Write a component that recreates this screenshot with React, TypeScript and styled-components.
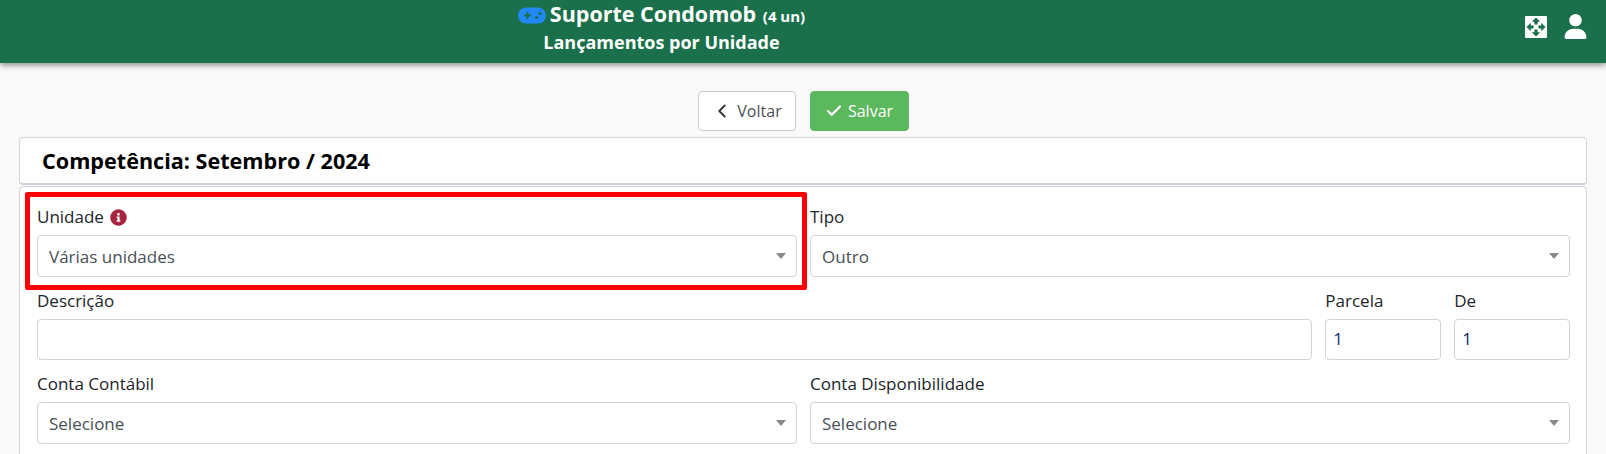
import React from "react";
import styled, { createGlobalStyle } from "styled-components";
import { FaInfoCircle } from "react-icons/fa";
import { FaUser } from "react-icons/fa6";
import { ChevronLeft, Check } from "lucide-react";

const Global = createGlobalStyle`
  html, body { margin: 0; padding: 0; background: #f9f9f9; }
  body { font-family: "Open Sans", "Noto Sans", sans-serif; font-size: 17px; color: #212529; overflow: hidden; }
  * { box-sizing: border-box; }
`;

const Page = styled.div`
  position: relative;
  width: 1606px;
  height: 454px;
  overflow: hidden;
`;

const Header = styled.header`
  height: 63px;
  background: #19704a;
  box-shadow: 0 2px 6px rgba(0, 0, 0, 0.45);
  display: flex;
  justify-content: space-between;
  color: #fff;
`;

const HeaderCenter = styled.div`
  margin-left: 497px;
  width: 329px;
  display: flex;
  flex-direction: column;
  align-items: center;
  font-weight: 700;
`;

const TitleLine = styled.div`
  display: flex;
  align-items: center;
  gap: 4px;
  font-size: 21.5px;
  line-height: 30px;
  height: 30px;
`;

const Small = styled.small`
  font-size: 15px;
  margin-left: 1px;
`;

const Subtitle = styled.div`
  font-size: 18px;
  line-height: 24px;
  margin-top: 0;
`;

const HeaderIcons = styled.div`
  display: flex;
  align-items: flex-start;
  gap: 16px;
  padding: 14px 18px 0 0;
`;

const ExpandSvg = styled.svg`
  margin-top: 2px;
`;

const Toolbar = styled.div`
  display: flex;
  justify-content: center;
  gap: 14px;
  padding: 28px 0 6px;
`;

const Btn = styled.button<{ $green?: boolean }>`
  height: 40px;
  width: ${(p) => (p.$green ? "99px" : "98px")};
  display: flex;
  align-items: center;
  justify-content: center;
  gap: ${(p) => (p.$green ? "5px" : "4px")};
  border-radius: 4px;
  border: 1px solid ${(p) => (p.$green ? "#5cb85c" : "#ccc")};
  background: ${(p) => (p.$green ? "#5cb85c" : "#fff")};
  color: ${(p) => (p.$green ? "#fff" : "#495057")};
  font-family: inherit;
  font-size: 16px;
`;

const Main = styled.main`
  margin: 0 19px;
`;

const TitleCard = styled.section`
  height: 48px;
  background: #fff;
  border: 1px solid #ced4da;
  border-bottom-width: 2px;
  border-radius: 4px;
  padding-left: 22px;
  font-size: 21.6px;
  font-weight: 700;
  color: #000;
  line-height: 46px;
`;

const FormCard = styled.section`
  margin-top: 1px;
  height: 300px;
  background: #fff;
  border: 1px solid #ced4da;
  border-radius: 4px;
  padding: 17px 16px 0 17px;
  display: grid;
  grid-template-columns: repeat(12, 1fr);
  column-gap: 13px;
  grid-auto-rows: 83.5px;
  align-content: start;
`;

const Field = styled.div<{ $span: number }>`
  grid-column: span ${(p) => p.$span};
  display: flex;
  flex-direction: column;
`;

const Label = styled.label`
  display: flex;
  align-items: center;
  gap: 6px;
  height: 31px;
  padding-bottom: 5px;
  font-size: 17px;
  line-height: 24px;
`;

const Control = styled.div<{ $input?: boolean }>`
  height: 41.5px;
  background: #fff;
  border: 1px solid #ced4da;
  border-radius: 4px;
  display: flex;
  align-items: center;
  justify-content: space-between;
  padding: ${(p) => (p.$input ? "0 7px 2px" : "1px 10px 0 11px")};
  font-size: 17px;
  color: #495057;
`;

const InputValue = styled.span`
  color: #14295f;
`;

const Caret = styled.span`
  width: 0;
  height: 0;
  border-left: 5px solid transparent;
  border-right: 5px solid transparent;
  border-top: 6px solid #888;
`;

const Highlight = styled.div`
  position: absolute;
  left: 25px;
  top: 192px;
  width: 782px;
  height: 98px;
  border: 5px solid #ff0000;
  border-radius: 2px;
  pointer-events: none;
`;

const Gamepad = () => (
  <svg width="28" height="17" viewBox="0 0 28 17" aria-hidden="true">
    <rect x="0" y="0.5" width="28" height="16" rx="8" fill="#2288f6" />
    <path d="M6 7.5h2.5v-2.5h2v2.5H13v2h-2.5V12h-2V9.5H6z" fill="#19704a" />
    <circle cx="18.5" cy="10.5" r="1.6" fill="#19704a" />
    <circle cx="22" cy="6.5" r="1.6" fill="#19704a" />
  </svg>
);

const arrow = "M11 1.5L15.2 5.8H12.6V8.6H9.4V5.8H6.8z";

const ExpandIcon = () => (
  <ExpandSvg width="22" height="22" viewBox="0 0 22 22" aria-hidden="true">
    <rect width="22" height="22" rx="1" fill="#fff" />
    <g fill="#19704a">
      <path d={arrow} />
      <path d={arrow} transform="rotate(90 11 11)" />
      <path d={arrow} transform="rotate(180 11 11)" />
      <path d={arrow} transform="rotate(270 11 11)" />
    </g>
  </ExpandSvg>
);

const SelectField = ({ span, label, value, extra }: { span: number; label: string; value: string; extra?: React.ReactNode }) => (
  <Field $span={span}>
    <Label>{label}{extra}</Label>
    <Control>
      <span>{value}</span>
      <Caret />
    </Control>
  </Field>
);

const InputField = ({ span, label, value }: { span: number; label: string; value?: string }) => (
  <Field $span={span}>
    <Label>{label}</Label>
    <Control $input>
      <InputValue>{value}</InputValue>
    </Control>
  </Field>
);

export default function App() {
  return (
    <Page>
      <Global />
      <Header>
        <HeaderCenter>
          <TitleLine>
            <Gamepad />
            <span>Suporte Condomob <Small>(4 un)</Small></span>
          </TitleLine>
          <Subtitle>Lançamentos por Unidade</Subtitle>
        </HeaderCenter>
        <HeaderIcons>
          <ExpandIcon />
          <FaUser size={25} color="#fff" />
        </HeaderIcons>
      </Header>
      <Toolbar>
        <Btn>
          <ChevronLeft size={22} color="#333" />
          Voltar
        </Btn>
        <Btn $green>
          <Check size={18} strokeWidth={3} color="#fff" />
          Salvar
        </Btn>
      </Toolbar>
      <Main>
        <TitleCard>Competência: Setembro / 2024</TitleCard>
        <FormCard>
          <SelectField span={6} label="Unidade" value="Várias unidades" extra={<FaInfoCircle size={17} color="#a6243f" />} />
          <SelectField span={6} label="Tipo" value="Outro" />
          <InputField span={10} label="Descrição" />
          <InputField span={1} label="Parcela" value="1" />
          <InputField span={1} label="De" value="1" />
          <SelectField span={6} label="Conta Contábil" value="Selecione" />
          <SelectField span={6} label="Conta Disponibilidade" value="Selecione" />
        </FormCard>
      </Main>
      <Highlight />
    </Page>
  );
}
